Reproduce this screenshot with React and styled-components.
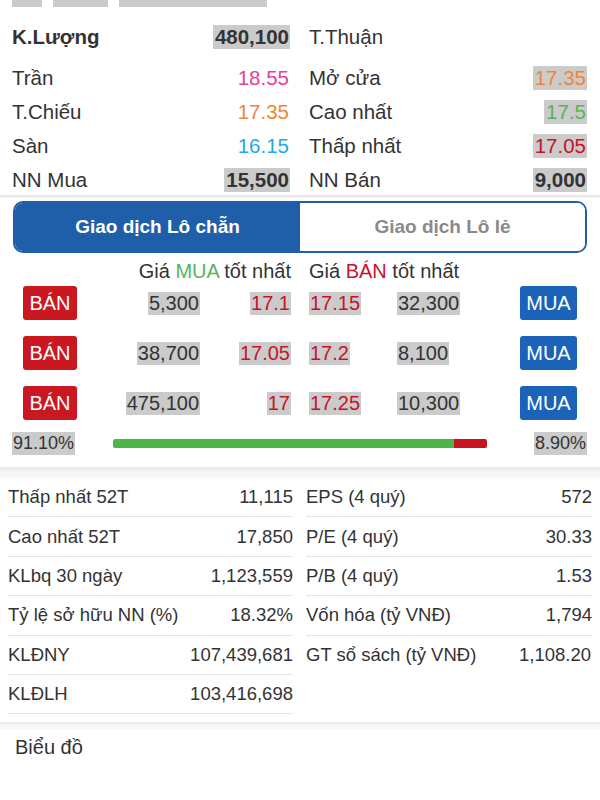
import React from "react";
import styled, { createGlobalStyle } from "styled-components";

const GlobalStyle = createGlobalStyle`
  body {
    margin: 0;
    background: #fff;
    font-family: "Liberation Sans", Arial, sans-serif;
    color: #333;
  }
`;

const colors = {
  pink: "#e6409b",
  orange: "#ef8637",
  cyan: "#23a9e6",
  green: "#57b45a",
  red: "#c8122a",
  hl: "#cbcbcb",
  blue: "#1f5fa9",
  btnBlue: "#1a63b8",
  btnRed: "#cb1820"
};

const summaryLeft = [
  { label: "Trần", value: "18.55", color: colors.pink },
  { label: "T.Chiếu", value: "17.35", color: colors.orange },
  { label: "Sàn", value: "16.15", color: colors.cyan },
  { label: "NN Mua", value: "15,500", hl: true, bold: true }
];

const summaryRight = [
  { label: "Mở cửa", value: "17.35", color: colors.orange, hl: true },
  { label: "Cao nhất", value: "17.5", color: colors.green, hl: true },
  { label: "Thấp nhất", value: "17.05", color: colors.red, hl: true },
  { label: "NN Bán", value: "9,000", hl: true, bold: true }
];

const book = [
  { bidVol: "5,300", bid: "17.1", ask: "17.15", askVol: "32,300" },
  { bidVol: "38,700", bid: "17.05", ask: "17.2", askVol: "8,100" },
  { bidVol: "475,100", bid: "17", ask: "17.25", askVol: "10,300" }
];

const statsLeft = [
  ["Thấp nhất 52T", "11,115"],
  ["Cao nhất 52T", "17,850"],
  ["KLbq 30 ngày", "1,123,559"],
  ["Tỷ lệ sở hữu NN (%)", "18.32%"],
  ["KLĐNY", "107,439,681"],
  ["KLĐLH", "103,416,698"]
];

const statsRight = [
  ["EPS (4 quý)", "572"],
  ["P/E (4 quý)", "30.33"],
  ["P/B (4 quý)", "1.53"],
  ["Vốn hóa (tỷ VNĐ)", "1,794"],
  ["GT sổ sách (tỷ VNĐ)", "1,108.20"]
];

const buyPct = 91.1;

export default function App() {
  return (
    <Page>
      <GlobalStyle />
      <Stub>
        <StubBox w={30} />
        <StubBox w={55} />
        <StubBox w={148} />
      </Stub>

      <Summary>
        <Column>
          <HeadRow>
            <Label bold>K.Lượng</Label>
            <Value hl bold>480,100</Value>
          </HeadRow>
          {summaryLeft.map(r => (
            <SumRow key={r.label}>
              <Label>{r.label}</Label>
              <Value hl={r.hl} bold={r.bold} color={r.color}>
                {r.value}
              </Value>
            </SumRow>
          ))}
        </Column>
        <Column>
          <HeadRow>
            <Label>T.Thuận</Label>
          </HeadRow>
          {summaryRight.map(r => (
            <SumRow key={r.label}>
              <Label>{r.label}</Label>
              <Value hl={r.hl} bold={r.bold} color={r.color}>
                {r.value}
              </Value>
            </SumRow>
          ))}
        </Column>
      </Summary>

      <Divider />

      <Tabs>
        <Tab active>Giao dịch Lô chẵn</Tab>
        <Tab>Giao dịch Lô lẻ</Tab>
      </Tabs>

      <BookHeader>
        <BookHead side="bid">
          Giá <Mark color={colors.green}>MUA</Mark> tốt nhất
        </BookHead>
        <BookHead side="ask">
          Giá <Mark color={colors.red}>BÁN</Mark> tốt nhất
        </BookHead>
      </BookHeader>

      <Book>
        {book.map((r, i) => (
          <React.Fragment key={i}>
            <ActionButton kind="sell">BÁN</ActionButton>
            <Cell align="right">
              <Hl>{r.bidVol}</Hl>
            </Cell>
            <Cell align="right">
              <Hl color={colors.red}>{r.bid}</Hl>
            </Cell>
            <Spacer />
            <Cell>
              <Hl color={colors.red}>{r.ask}</Hl>
            </Cell>
            <Cell>
              <Hl>{r.askVol}</Hl>
            </Cell>
            <ActionButton kind="buy">MUA</ActionButton>
          </React.Fragment>
        ))}
      </Book>

      <RatioRow>
        <Pct>
          <Hl>91.10%</Hl>
        </Pct>
        <RatioBar>
          <BuyPart style={{ width: `${buyPct}%` }} />
          <SellPart />
        </RatioBar>
        <Pct align="right">
          <Hl>8.90%</Hl>
        </Pct>
      </RatioRow>

      <Band />

      <Stats>
        <StatsColumn>
          {statsLeft.map(([k, v]) => (
            <StatRow key={k}>
              <span>{k}</span>
              <span>{v}</span>
            </StatRow>
          ))}
        </StatsColumn>
        <StatsColumn right>
          {statsRight.map(([k, v], i) => (
            <StatRow key={k} last={i === statsRight.length - 1}>
              <span>{k}</span>
              <span>{v}</span>
            </StatRow>
          ))}
        </StatsColumn>
      </Stats>

      <Band small />

      <ChartTitle>Biểu đồ</ChartTitle>
    </Page>
  );
}

const Page = styled.div`
  width: 600px;
  height: 800px;
  overflow: hidden;
  background: #fff;
`;

const Stub = styled.div`
  display: flex;
  gap: 11px;
  padding-left: 12px;
  height: 7px;
`;

const StubBox = styled.div`
  width: ${p => p.w}px;
  height: 7px;
  background: ${colors.hl};
`;

const Summary = styled.div`
  display: grid;
  grid-template-columns: 1fr 1fr;
  column-gap: 19px;
  padding: 18px 13px 0 12px;
`;

const Column = styled.div`
  display: flex;
  flex-direction: column;
  gap: 10px;
`;

const SumRow = styled.div`
  display: flex;
  justify-content: space-between;
  align-items: center;
  height: 24px;
  font-size: 20.5px;
`;

const HeadRow = styled(SumRow)`
  margin-bottom: 7px;
`;

const Label = styled.span`
  font-weight: ${p => (p.bold ? 700 : 400)};
  color: #333;
`;

const Value = styled.span`
  line-height: 24px;
  padding: 0 1px 0 2px;
  font-weight: ${p => (p.bold ? 700 : 400)};
  color: ${p => p.color || "#333"};
  background: ${p => (p.hl ? colors.hl : "transparent")};
`;

const Divider = styled.div`
  height: 3px;
  margin-top: 3px;
  background: linear-gradient(#e4e4e4, #f6f6f6);
`;

const Tabs = styled.div`
  display: grid;
  grid-template-columns: 1fr 1fr;
  margin: 3px 13px 0 13px;
  height: 52px;
  border: 2px solid ${colors.blue};
  border-radius: 10px;
  overflow: hidden;
  box-sizing: border-box;
`;

const Tab = styled.div`
  display: flex;
  align-items: center;
  justify-content: center;
  font-size: 19px;
  font-weight: 700;
  color: ${p => (p.active ? "#fff" : "#8a8a8a")};
  background: ${p => (p.active ? colors.blue : "#fff")};
`;

const gridCols = "54px 123px 91px 18px 88px 123px 57px";

const BookHeader = styled.div`
  display: grid;
  grid-template-columns: ${gridCols};
  padding-left: 23px;
  margin-top: 6px;
  height: 24px;
  font-size: 20px;
`;

const BookHead = styled.div`
  grid-column: ${p => (p.side === "bid" ? "1 / 4" : "5 / 8")};
  text-align: ${p => (p.side === "bid" ? "right" : "left")};
  line-height: 24px;
  color: #333;
`;

const Book = styled.div`
  display: grid;
  grid-template-columns: ${gridCols};
  grid-auto-rows: 34px;
  row-gap: 16px;
  padding-left: 23px;
  margin-top: 3px;
  font-size: 20px;
`;

const Mark = styled.span`
  color: ${p => p.color};
`;

const ActionButton = styled.div`
  display: flex;
  align-items: center;
  justify-content: center;
  border-radius: 3px;
  color: #fff;
  font-size: 20px;
  background: ${p => (p.kind === "sell" ? colors.btnRed : colors.btnBlue)};
`;

const Cell = styled.div`
  display: flex;
  align-items: center;
  justify-content: ${p => (p.align === "right" ? "flex-end" : "flex-start")};
`;

const Spacer = styled.div``;

const Hl = styled.span`
  line-height: 23px;
  padding: 0 1px;
  background: ${colors.hl};
  color: ${p => p.color || "#333"};
`;

const RatioRow = styled.div`
  display: grid;
  grid-template-columns: 101px 374px 1fr;
  align-items: center;
  height: 22px;
  margin-top: 12px;
  padding: 0 13px 0 12px;
  font-size: 18px;
`;

const Pct = styled.div`
  display: flex;
  justify-content: ${p => (p.align === "right" ? "flex-end" : "flex-start")};
`;

const RatioBar = styled.div`
  display: flex;
  height: 9px;
  border-radius: 2px;
  overflow: hidden;
`;

const BuyPart = styled.div`
  background: #4cb748;
`;

const SellPart = styled.div`
  flex: 1;
  background: #c8141e;
`;

const Band = styled.div`
  height: ${p => (p.small ? 7 : 11)}px;
  margin-top: ${p => (p.small ? 8 : 13)}px;
  background: linear-gradient(#e6e6e6, #f5f5f5 40%, #f8f8f8);
`;

const Stats = styled.div`
  display: grid;
  grid-template-columns: 285px 286px;
  column-gap: 13px;
  padding-left: 8px;
`;

const StatsColumn = styled.div`
  display: flex;
  flex-direction: column;
`;

const StatRow = styled.div`
  display: flex;
  justify-content: space-between;
  align-items: center;
  box-sizing: border-box;
  height: 39.4px;
  padding-right: ${p => (p.last ? 1 : 0)}px;
  font-size: 18.5px;
  color: #333;
  border-bottom: 1px solid ${p => (p.last ? "transparent" : "#e6e6e6")};
`;

const ChartTitle = styled.div`
  padding: 8px 15px;
  font-size: 20px;
  line-height: 20px;
  color: #333;
`;
